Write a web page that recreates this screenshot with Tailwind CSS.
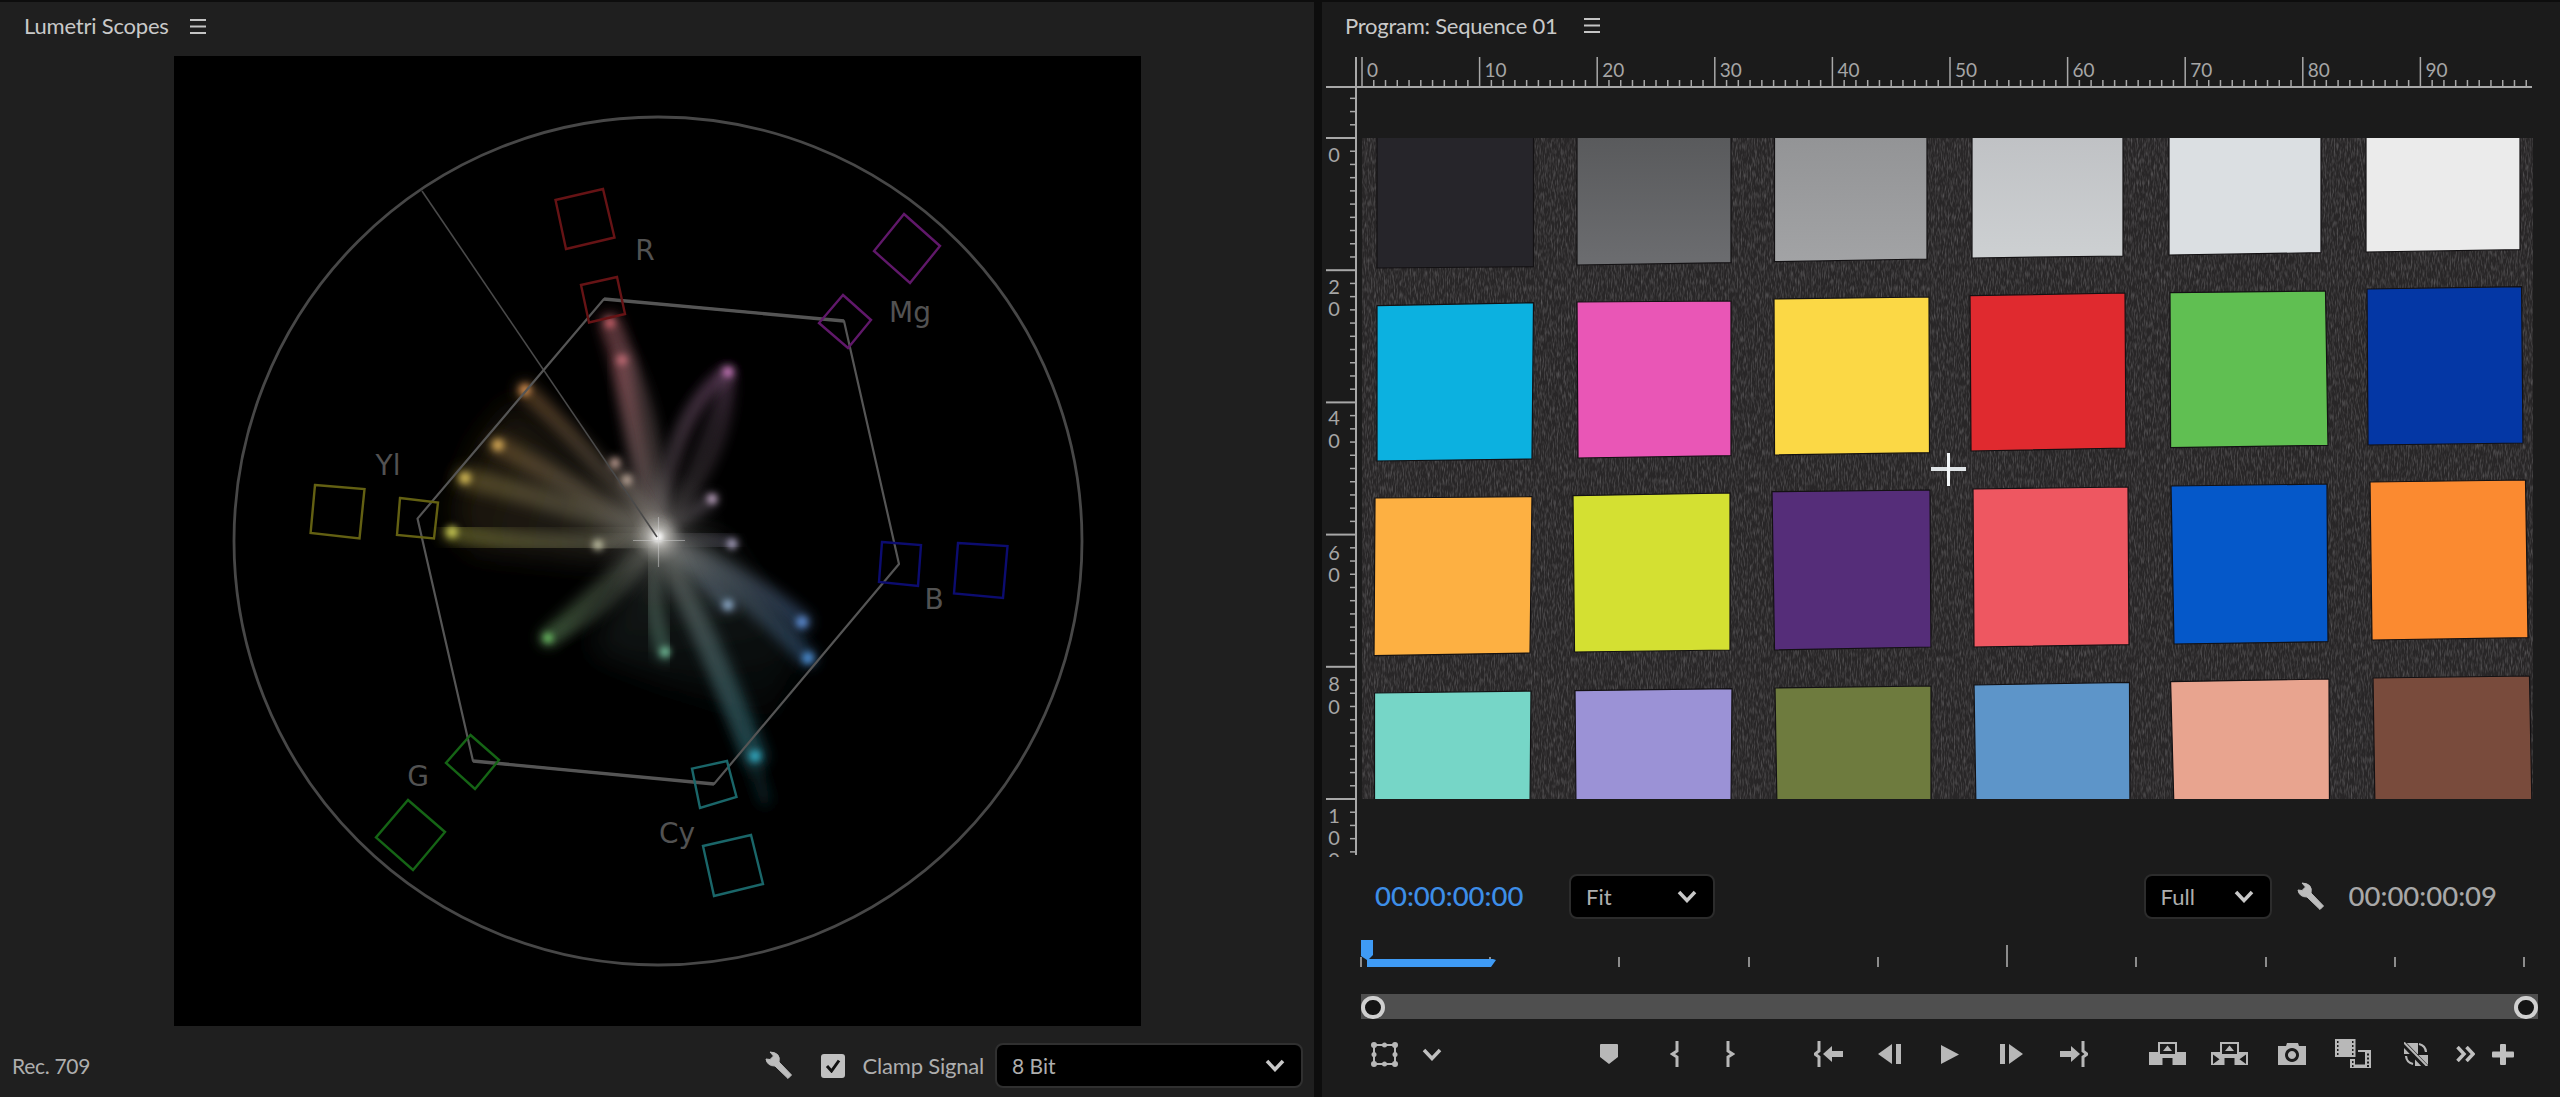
<!DOCTYPE html>
<html lang="en">
<head>
<meta charset="UTF-8">
<title>Lumetri Scopes / Program Monitor</title>
<script src="https://cdn.jsdelivr.net/npm/@tailwindcss/browser@4"></script>
</head>
<body class="bg-[#0d0d0d] overflow-hidden font-[family-name:Lato,sans-serif]">
<div class="w-[2560px] h-[1097px] flex pt-[2px] gap-[8px]">

  <!-- Lumetri Scopes panel -->
  <section class="w-[1314px] flex flex-col bg-[#1f1f1f] text-[#aeaeae]">
    <header class="h-[54px] flex items-center pl-[24px] pb-[6px] gap-[21px] text-[#c9c9c9]">
      <h2 class="text-[22px] tracking-[-0.2px] leading-none">Lumetri Scopes</h2>
      <svg width="16" height="15" viewBox="0 0 16 15" fill="#c4c4c4"><rect width="16" height="2"/><rect y="6.5" width="16" height="2"/><rect y="13" width="16" height="2"/></svg>
    </header>

    <div class="ml-[174px] w-[967px] h-[970px] bg-black">
      <svg width="967" height="970" viewBox="174 56 967 970" fill="none">
        <defs>
          <filter id="blur-soft" x="-40%" y="-40%" width="180%" height="180%"><feGaussianBlur stdDeviation="6.500"/></filter>
          <filter id="blur-dot" x="-100%" y="-100%" width="300%" height="300%"><feGaussianBlur stdDeviation="3.800"/></filter>
          <filter id="blur-wide" x="-30%" y="-30%" width="160%" height="160%"><feGaussianBlur stdDeviation="14"/></filter>
          <radialGradient id="core"><stop offset="0" stop-color="#fff" stop-opacity=".9"/><stop offset=".1" stop-color="#d8d6d2" stop-opacity=".5"/><stop offset=".4" stop-color="#7a7874" stop-opacity=".2"/><stop offset="1" stop-color="#555" stop-opacity="0"/></radialGradient>
          <linearGradient id="fan" gradientUnits="userSpaceOnUse" x1="658" y1="537" x2="460" y2="470"><stop offset="0" stop-color="#6f6b60" stop-opacity=".3"/><stop offset="1" stop-color="#5a4722" stop-opacity=".28"/></linearGradient>
          <linearGradient id="fan-low" gradientUnits="userSpaceOnUse" x1="658" y1="537" x2="700" y2="800"><stop offset="0" stop-color="#5e6a62" stop-opacity=".3"/><stop offset="1" stop-color="#1f4a50" stop-opacity="0"/></linearGradient>
        </defs>

        <g id="spray">
          <path d="M658 537 L515 400 L480 440 L450 510 L470 550 L600 560 Z" fill="url(#fan)" filter="url(#blur-wide)"/>
          <path d="M658 537 L590 650 L660 680 L770 720 L800 650 L720 540 Z" fill="url(#fan-low)" filter="url(#blur-wide)"/>
        </g>
        <circle cx="658" cy="537" r="70" fill="url(#core)"/>
        <circle cx="658" cy="537" r="5" fill="#fff" filter="url(#blur-dot)"/>
        <path d="M633 540.500 H685 M658.500 517 V567" stroke="#cfcfcf" stroke-opacity=".5" stroke-width="1.200"/>

        <!-- graticule -->
        <circle cx="658" cy="541" r="424" stroke="#474747" stroke-width="2.800"/>
        <path d="M422 191 L657 537" stroke="#4a4a4a" stroke-width="1.600"/>
        <path d="M604 299 L844 321 L899 564 L714 784 L473 761 L417.500 518.600 Z" stroke="#555" stroke-width="2.200" stroke-linejoin="round"/>
        <path d="M604 299 L844 321 M473 761 L714 784" stroke="#555" stroke-width="3.400"/>

        <g stroke-width="2.400">
          <path d="M555.500 200 L603 189 L614.500 237.500 L566 249 Z M581 285 L617 277 L625 314 L589 322.500 Z" stroke="#661315"/>
          <path d="M904 214 L940 246 L910 283 L874 251 Z M843 295 L871 320 L848 348 L819 323 Z" stroke="#60186a"/>
          <path d="M882 542 L921 545 L918 586 L879 582 Z M958 543 L1007.500 546 L1003 598 L954 593.500 Z" stroke="#0c0c70"/>
          <path d="M692 768.600 L727 761 L736.500 797 L700 808 Z M703 846 L751 835 L763 884 L714 896 Z" stroke="#1a6669"/>
          <path d="M470.500 735 L499 760 L475 789 L446 763 Z M408 800 L445 832 L413 870 L376 837.500 Z" stroke="#156415"/>
          <path d="M315 485 L364.500 489 L359.500 538.500 L310.600 533 Z M400 498 L438 502.500 L434 538.500 L397 535 Z" stroke="#636012"/>
        </g>

        <g fill="#525252" font-family="DejaVu Sans" font-size="28" text-anchor="middle">
          <text x="645" y="260">R</text>
          <text x="910" y="322">Mg</text>
          <text x="388" y="475">Yl</text>
          <text x="934" y="609">B</text>
          <text x="418" y="786">G</text>
          <text x="677" y="843">Cy</text>
        </g>
      </svg>
    </div>

    <footer class="flex-1 flex items-center pl-[12px] pr-[11px] pt-[8px] text-[21px]">
      <span class="tracking-[-0.3px]">Rec. 709</span>
      <svg class="ml-auto" width="28" height="29" viewBox="0 0 28 29" fill="#bdbdbd" stroke="#bdbdbd" stroke-linejoin="round"><path d="M5 1 L8.500 5 L5 8.500 L1 8 Q2 15 10 15 L23 27.500 L26.500 24 L14 11 Q16 1.500 5 1 Z"/></svg>
      <span class="ml-[28px] w-[24px] h-[24px] rounded-[3px] bg-[#c0c0c0] flex items-center justify-center">
        <svg width="16" height="14" viewBox="0 0 16 14" fill="none" stroke="#111" stroke-width="3"><path d="M2 7 L6.500 12 L14 1.500"/></svg>
      </span>
      <span class="ml-[18px] text-[22px] tracking-[-0.2px]">Clamp Signal</span>
      <div class="ml-[11px] w-[308px] h-[45px] rounded-[8px] bg-black border-2 border-[#303030] flex items-center pl-[15px] pr-[16px]">
        <span>8 Bit</span>
        <svg class="ml-auto" width="20" height="13" viewBox="0 0 20 13" fill="none" stroke="#c8c8c8" stroke-width="3.500"><path d="M2 2 L10 10.500 L18 2"/></svg>
      </div>
    </footer>
  </section>

  <!-- Program monitor panel -->
  <section class="flex-1 flex flex-col bg-[#1b1b1b] text-[#aeaeae]">
    <header class="h-[53px] flex items-center pl-[23px] pb-[6px] gap-[27px] text-[#c9c9c9]">
      <h2 class="text-[22px] tracking-[-0.25px] leading-none">Program: Sequence 01</h2>
      <svg width="16" height="15" viewBox="0 0 16 15" fill="#c4c4c4"><rect width="16" height="2"/><rect y="6.500" width="16" height="2"/><rect y="13" width="16" height="2"/></svg>
    </header>

    <svg width="1238" height="803" viewBox="1322 55 1238 803" fill="none">
      <defs>
        <filter id="paper" x="0" y="0" width="100%" height="100%"><feTurbulence type="fractalNoise" baseFrequency="0.7 0.14" numOctaves="2" seed="4"/><feColorMatrix values="0 0 0 0 .3  0 0 0 0 .29  0 0 0 0 .3  0 0 0 .9 -.38"/></filter>
        <clipPath id="photo"><rect x="1362" y="138" width="1171" height="661"/></clipPath>
        <clipPath id="vruler"><rect x="1322" y="88" width="34" height="769"/></clipPath>
        <linearGradient id="g2" x1="0" y1="0" x2="0" y2="1"><stop offset="0" stop-color="#58595b"/><stop offset="1" stop-color="#6c6d70"/></linearGradient>
        <linearGradient id="g3" x1="0" y1="0" x2="0" y2="1"><stop offset="0" stop-color="#929395"/><stop offset="1" stop-color="#a2a3a5"/></linearGradient>
        <linearGradient id="g4" x1="0" y1="0" x2="0" y2="1"><stop offset="0" stop-color="#bfc1c4"/><stop offset="1" stop-color="#cdd0d2"/></linearGradient>
      </defs>
      <g clip-path="url(#photo)">
        <rect x="1362" y="138" width="1171" height="661" fill="#282627"/>
        <rect x="1362" y="138" width="1171" height="661" filter="url(#paper)"/>
        <g stroke="#131113" stroke-width="1.200" stroke-linejoin="round">
          <!-- row 1 -->
          <path fill="#26252a" d="M1377 130 H1533.500 V266.700 L1377 268 Z"/>
          <path fill="url(#g2)" d="M1577 130 H1731 V262.700 L1577 265 Z"/>
          <path fill="url(#g3)" d="M1774.500 130 H1927 V259 L1774.500 261.700 Z"/>
          <path fill="url(#g4)" d="M1972 130 H2123 V256 L1972 258 Z"/>
          <path fill="#dbdfe2" d="M2169 130 H2321 V252.700 L2169 255 Z"/>
          <path fill="#ebebeb" d="M2366 130 H2520 V249.700 L2366 252 Z"/>
          <!-- row 2 -->
          <path fill="#0cb1e0" d="M1377 305.700 L1533.500 302.700 L1532 459 L1377 461 Z"/>
          <path fill="#e956b6" d="M1577 302 L1731 301 L1731 455.700 L1578 458 Z"/>
          <path fill="#fbd845" d="M1774 299 L1929 297 L1929.500 452.700 L1774.500 455 Z"/>
          <path fill="#e02a2f" d="M1970 295.700 L2125 293 L2126 448 L1971 451 Z"/>
          <path fill="#60bf52" d="M2170 292.700 L2325.500 291 L2328 445.300 L2170.600 447.700 Z"/>
          <path fill="#0437a5" d="M2367 289 L2521.600 286.700 L2523 443 L2368 445 Z"/>
          <!-- row 3 -->
          <path fill="#fdb042" d="M1375 498 L1532 496.700 L1530 653 L1374 655.700 Z"/>
          <path fill="#d4e032" d="M1573 495.700 L1730 493 L1730 650 L1574.500 652 Z"/>
          <path fill="#552d79" d="M1772 491.700 L1930 490 L1931 647 L1774.500 650 Z"/>
          <path fill="#ee5761" d="M1973 489 L2128 487 L2129 644.700 L1974 647 Z"/>
          <path fill="#0558c9" d="M2171 486 L2327 484 L2328 641.700 L2174 644 Z"/>
          <path fill="#fb8a30" d="M2370 482 L2525.500 480 L2528 637.700 L2372 640 Z"/>
          <!-- row 4 -->
          <path fill="#76d6c7" d="M1374.500 693 L1531 691 L1530 810 L1374.500 810 Z"/>
          <path fill="#9b92d6" d="M1575 690.700 L1732 688.700 L1731 810 L1576 810 Z"/>
          <path fill="#6e7b3e" d="M1775 688 L1931 686 L1931 810 L1777 810 Z"/>
          <path fill="#5d95c9" d="M1974 685 L2129.500 682.300 L2130 810 L1976 810 Z"/>
          <path fill="#e8a48f" d="M2170.600 681.700 L2329 679 L2329.500 810 L2174 810 Z"/>
          <path fill="#794b3c" d="M2373 678 L2529.500 676 L2532 810 L2375 810 Z"/>
        </g>
      </g>

      <!-- cursor -->
      <path d="M1931 469 H1966" stroke="#dfe3e6" stroke-width="4"/>
      <path d="M1948.500 453 V486" stroke="#f2f5f7" stroke-width="3"/>

      <!-- rulers, ticks are filled in by the script below -->
      <g id="ruler-lines" stroke="#a8a8a8" stroke-width="1.500"></g>
      <g fill="#a6a6a6" font-size="19" id="ruler-top"></g>
      <g fill="#a6a6a6" font-size="20" text-anchor="middle" clip-path="url(#vruler)">
        <text x="1334" y="162">0</text>
        <text x="1334" y="294">2</text><text x="1334" y="316">0</text>
        <text x="1334" y="425">4</text><text x="1334" y="448">0</text>
        <text x="1334" y="560">6</text><text x="1334" y="582">0</text>
        <text x="1334" y="691">8</text><text x="1334" y="714">0</text>
        <text x="1334" y="823">1</text><text x="1334" y="845">0</text><text x="1334" y="867">0</text>
      </g>
    </svg>

    <!-- timecode row -->
    <div class="h-[76px] flex items-center pl-[53px] pr-[63px] text-[22px]">
      <span class="w-[150px] text-[27.5px] leading-none font-medium text-[#3d8ee8]">00:00:00:00</span>
      <div class="ml-[44px] w-[146px] h-[45px] rounded-[8px] bg-black border-2 border-[#2c2c2c] flex items-center pl-[15px] pr-[16px]">
        <span>Fit</span>
        <svg class="ml-auto" width="20" height="13" viewBox="0 0 20 13" fill="none" stroke="#c8c8c8" stroke-width="3.500"><path d="M2 2 L10 10.500 L18 2"/></svg>
      </div>
      <div class="ml-auto w-[128px] h-[45px] rounded-[8px] bg-black border-2 border-[#2c2c2c] flex items-center pl-[15px] pr-[16px]">
        <span>Full</span>
        <svg class="ml-auto" width="20" height="13" viewBox="0 0 20 13" fill="none" stroke="#c8c8c8" stroke-width="3.500"><path d="M2 2 L10 10.500 L18 2"/></svg>
      </div>
      <svg class="ml-[25px]" width="28" height="29" viewBox="0 0 28 29" fill="#bdbdbd" stroke="#bdbdbd" stroke-linejoin="round"><path d="M5 1 L8.500 5 L5 8.500 L1 8 Q2 15 10 15 L23 27.500 L26.500 24 L14 11 Q16 1.500 5 1 Z"/></svg>
      <span class="ml-[24px] text-[27.5px] leading-none font-medium text-[#a8a8a8]">00:00:00:09</span>
    </div>

    <!-- time ruler -->
    <div class="relative ml-[38px] mt-[6px] w-[1165px] h-[27px] flex justify-between items-end">
      <i class="w-[2px] h-[10px] bg-[#8c8c8c]"></i><i class="w-[2px] h-[10px] bg-[#8c8c8c]"></i><i class="w-[2px] h-[10px] bg-[#8c8c8c]"></i><i class="w-[2px] h-[10px] bg-[#8c8c8c]"></i><i class="w-[2px] h-[10px] bg-[#8c8c8c]"></i><i class="w-[2px] h-[22px] bg-[#8c8c8c]"></i><i class="w-[2px] h-[10px] bg-[#8c8c8c]"></i><i class="w-[2px] h-[10px] bg-[#8c8c8c]"></i><i class="w-[2px] h-[10px] bg-[#8c8c8c]"></i><i class="w-[2px] h-[10px] bg-[#8c8c8c]"></i>
      <svg class="absolute left-0 top-0" width="140" height="27" viewBox="0 0 140 27" fill="#3f9bf5"><path d="M1 0 H13 V15 L9 19 H133 L136 20 L131 27 H7 V20 L1 16 Z"/></svg>
    </div>

    <!-- zoom bar -->
    <div class="relative ml-[39px] mt-[27px] w-[1177px] h-[25px] bg-[#4f4f4f]">
      <span class="absolute left-0 top-[2px] w-[24px] h-[23px] rounded-full bg-[#141414] border-[4px] border-[#cfcfcf]"></span>
      <span class="absolute right-0 top-[2px] w-[24px] h-[23px] rounded-full bg-[#141414] border-[4px] border-[#cfcfcf]"></span>
    </div>

    <!-- transport buttons -->
    <div class="h-[70px] flex items-center pl-[49px]">
      <!-- safe margins -->
      <svg width="27" height="25" viewBox="0 0 27 25" fill="#b8b8b8" stroke="#b8b8b8"><path d="M3 3 H24 V22 H3 Z" fill="none" stroke-width="2"/><g stroke="none"><circle cx="3" cy="3" r="3"/><circle cx="13.500" cy="3" r="2.500"/><circle cx="24" cy="3" r="3"/><circle cx="3" cy="12.500" r="2.500"/><circle cx="24" cy="12.500" r="2.500"/><circle cx="3" cy="22" r="3"/><circle cx="13.500" cy="22" r="2.500"/><circle cx="24" cy="22" r="3"/></g></svg>
      <svg class="ml-[24px]" width="20" height="13" viewBox="0 0 20 13" fill="none" stroke="#c0c0c0" stroke-width="3.500"><path d="M2 2 L10 10.500 L18 2"/></svg>
      <!-- marker -->
      <svg class="ml-[158px]" width="18" height="20" viewBox="0 0 18 20" fill="#b8b8b8"><path d="M1 0 H17 Q18 0 18 1 V13 L9 20 L0 13 V1 Q0 0 1 0 Z"/></svg>
      <!-- in / out -->
      <svg class="ml-[52px]" width="10" height="26" viewBox="0 0 10 26" fill="none" stroke="#b8b8b8" stroke-width="3"><path d="M7 0 V10 L2.500 13 L7 16 V26"/></svg>
      <svg class="ml-[45px]" width="10" height="26" viewBox="0 0 10 26" fill="none" stroke="#b8b8b8" stroke-width="3"><path d="M3 0 V10 L7.500 13 L3 16 V26"/></svg>
      <!-- go to in -->
      <svg class="ml-[79px]" width="29" height="26" viewBox="0 0 29 26" fill="#b8b8b8"><path d="M5 0 V10 L1 13 L5 16 V26" fill="none" stroke="#b8b8b8" stroke-width="3"/><path d="M9 13 L18 5 V10 H29 V16 H18 V21 Z"/></svg>
      <!-- step back -->
      <svg class="ml-[35px]" width="23" height="20" viewBox="0 0 23 20" fill="#b8b8b8"><path d="M0 10 L14 0 V20 Z"/><rect x="18" width="5" height="20"/></svg>
      <!-- play -->
      <svg class="ml-[40px]" width="18" height="19" viewBox="0 0 18 19" fill="#b8b8b8"><path d="M0 0 L18 9.500 L0 19 Z"/></svg>
      <!-- step forward -->
      <svg class="ml-[41px]" width="23" height="20" viewBox="0 0 23 20" fill="#b8b8b8"><rect width="5" height="20"/><path d="M9 0 L23 10 L9 20 Z"/></svg>
      <!-- go to out -->
      <svg class="ml-[37px]" width="28" height="26" viewBox="0 0 28 26" fill="#b8b8b8"><path d="M0 10 H11 V5 L20 13 L11 21 V16 H0 Z"/><path d="M23 0 V10 L27 13 L23 16 V26" fill="none" stroke="#b8b8b8" stroke-width="3"/></svg>
      <!-- lift -->
      <svg class="ml-[61px]" width="37" height="24" viewBox="0 0 37 24" fill="#b8b8b8"><path d="M0 10 H37 V23 H23.500 V16 H13.500 V23 H0 Z"/><rect x="10" y="1" width="17" height="12" fill="#1b1b1b" stroke="#b8b8b8" stroke-width="2"/><path d="M18.500 3.500 L23 9 H14 Z"/></svg>
      <!-- extract -->
      <svg class="ml-[25px]" width="37" height="24" viewBox="0 0 37 24" fill="#b8b8b8"><path fill-rule="evenodd" d="M0 10 H37 V23 H23.500 V16 H13.500 V23 H0 Z M2 12.500 V22 L8.500 17.200 Z M35 12.500 V22 L28.500 17.200 Z"/><rect x="10" y="1" width="17" height="12" fill="#1b1b1b" stroke="#b8b8b8" stroke-width="2"/><path d="M18.500 3.500 L23 9 H14 Z"/></svg>
      <!-- export frame -->
      <svg class="ml-[30px]" width="28" height="22" viewBox="0 0 28 22" fill="#b8b8b8"><path fill-rule="evenodd" d="M0 3 H8 L9 0 H20 L21 3 H28 V22 H0 Z M14 5 A7 7 0 1 0 14.010 5 Z M14 8 A4 4 0 1 1 13.990 8 Z"/></svg>
      <!-- comparison view -->
      <svg class="ml-[29px]" width="37" height="30" viewBox="0 0 37 30" fill="#b8b8b8"><path fill-rule="evenodd" d="M0 0 H20.500 V18 H0 Z M2 2 V4 H3.500 V2 Z M2 6 V8 H3.500 V6 Z M2 10 V12 H3.500 V10 Z M2 14 V16 H3.500 V14 Z M17 2 V4 H18.500 V2 Z M17 6 V8 H18.500 V6 Z M17 10 V12 H18.500 V10 Z M17 14 V16 H18.500 V14 Z"/><path fill-rule="evenodd" d="M23 11 H36 V29 H15 V20 H20 V25.500 H30 V13 H23 Z M32 14.500 V16.500 H34 V14.500 Z M32 18.500 V20.500 H34 V18.500 Z M32 22.500 V24.500 H34 V22.500 Z M32 26 V28 H34 V26 Z M17 22 V24 H18.500 V22 Z M17 26 V28 H18.500 V26 Z"/></svg>
      <!-- toggle proxies -->
      <svg class="ml-[32px]" width="24" height="24" viewBox="0 0 24 24" fill="none"><path d="M0 1 H14 V12 H0 Z M11 13 H24 V24 H11 Z" fill="#b8b8b8"/><path d="M-1 1 L22 25" stroke="#1b1b1b" stroke-width="5.500"/><path d="M0 0.500 L23 24" stroke="#b8b8b8" stroke-width="2"/><path d="M15 2 A9 9 0 0 1 22 10" stroke="#1b1b1b" stroke-width="5"/><path d="M15 2 A9 9 0 0 1 22 10" stroke="#b8b8b8" stroke-width="2.200"/><path d="M2 14 A9 9 0 0 0 9 22" stroke="#1b1b1b" stroke-width="5"/><path d="M2 14 A9 9 0 0 0 9 22" stroke="#b8b8b8" stroke-width="2.200"/></svg>
      <!-- overflow -->
      <svg class="ml-[28px]" width="19" height="16" viewBox="0 0 19 16" fill="none" stroke="#c0c0c0" stroke-width="3.500"><path d="M1.500 1 L8 8 L1.500 15 M10.500 1 L17 8 L10.500 15"/></svg>
      <!-- add button -->
      <svg class="ml-[17px]" width="22" height="21" viewBox="0 0 22 21" fill="#c0c0c0"><rect x="8" width="6" height="21" rx="1"/><rect y="7.500" width="22" height="6" rx="1"/></svg>
    </div>
  </section>
</div>

<script>
  const SVG_NS = 'http://www.w3.org/2000/svg';
  const make = (name, attrs) => {
    const el = document.createElementNS(SVG_NS, name);
    for (const [k, v] of Object.entries(attrs)) el.setAttribute(k, v);
    return el;
  };

  // Program monitor rulers
  const lines = document.getElementById('ruler-lines');
  const topLabels = document.getElementById('ruler-top');
  const line = (x1, y1, x2, y2, w) => lines.appendChild(make('line', { x1, y1, x2, y2, 'stroke-width': w || 1.5 }));
  line(1326, 87, 2532, 87, 2);
  line(1356, 57, 1356, 855, 2);
  for (let i = 0; i * 11.76 + 1362 < 2532; i++) {
    const x = 1362 + i * 11.76;
    if (i % 10 === 0) {
      line(x, 57, x, 87);
      if (i <= 90) {
        const t = make('text', { x: x + 5, y: 77 });
        t.textContent = i;
        topLabels.appendChild(t);
      }
    } else {
      line(x, 80, x, 87);
    }
  }
  for (let i = -3; i * 13.22 + 138 < 855; i++) {
    const y = 138 + i * 13.22;
    if (i >= 0 && i % 10 === 0) line(1326, y, 1356, y, 2);
    else line(1350, y, 1356, y);
  }

  // Vectorscope trace: [endX, endY, colour, width, ctrlX, ctrlY]
  const spray = document.getElementById('spray');
  const defs = document.querySelector('svg defs');
  const traces = [
    [610, 323, '#a4525a', 20, 640, 420],
    [622, 360, '#9a5862', 16, 630, 440],
    [610, 323, '#5e4047', 12, 668, 420],
    [728, 372, '#955388', 9, 680, 400],
    [728, 372, '#75496f', 8, 735, 450],
    [728, 372, '#6a4868', 8, 700, 470],
    [728, 372, '#5d4360', 8, 660, 420],
    [525, 390, '#8a6238', 18, 590, 450],
    [498, 445, '#7e6034', 20, 580, 490],
    [465, 478, '#7a6a34', 22, 560, 500],
    [452, 532, '#808030', 22, 550, 552],
    [598, 545, '#a4a28c', 6, 630, 540],
    [615, 463, '#9c8880', 8, 640, 500],
    [627, 480, '#9a8a80', 7, 645, 510],
    [712, 499, '#948299', 10, 690, 515],
    [732, 544, '#7c7896', 10, 700, 535],
    [728, 605, '#607892', 16, 695, 570],
    [802, 622, '#40608c', 20, 740, 570],
    [808, 658, '#36608c', 18, 745, 590],
    [548, 638, '#507a4a', 18, 600, 590],
    [548, 638, '#3e5a3e', 11, 620, 610],
    [665, 652, '#4e7e6c', 18, 645, 600],
    [755, 756, '#246f7c', 24, 710, 640],
    [765, 800, '#123d44', 11, 735, 700]
  ];
  traces.forEach(([x, y, color, width, cx, cy], i) => {
    const id = 'trace-' + i;
    const g = make('linearGradient', { id, gradientUnits: 'userSpaceOnUse', x1: 658, y1: 537, x2: x, y2: y });
    g.appendChild(make('stop', { offset: 0, 'stop-color': '#8e8c86', 'stop-opacity': 0.28 }));
    g.appendChild(make('stop', { offset: 1, 'stop-color': color, 'stop-opacity': 0.55 }));
    defs.appendChild(g);
    spray.appendChild(make('path', {
      d: `M658 537 Q${cx} ${cy} ${x} ${y}`,
      stroke: `url(#${id})`, 'stroke-width': width, 'stroke-linecap': 'round',
      fill: 'none', filter: 'url(#blur-soft)'
    }));
  });

  // bright spots along the trace
  const dots = [
    [610, 323, '#d2646d', 5], [622, 360, '#cc6f79', 5], [728, 372, '#d47fc6', 5],
    [525, 390, '#cf8c4e', 6], [498, 445, '#d4a854', 6], [465, 478, '#d6bb54', 6],
    [452, 532, '#cbcb54', 6], [598, 545, '#d4d4b4', 5], [615, 463, '#cba89c', 5],
    [627, 480, '#cbb4a4', 5], [712, 499, '#ccb0d0', 5], [732, 544, '#b8b0d0', 5],
    [728, 605, '#98b8d8', 5], [802, 622, '#5c8ad0', 6], [808, 658, '#4c8cd0', 6],
    [548, 638, '#70c868', 5], [665, 652, '#78c8a0', 5], [755, 756, '#30a8c0', 6]
  ];
  dots.forEach(([cx, cy, fill, r]) => spray.appendChild(make('circle', { cx, cy, r, fill, filter: 'url(#blur-dot)' })));
</script>
</body>
</html>
